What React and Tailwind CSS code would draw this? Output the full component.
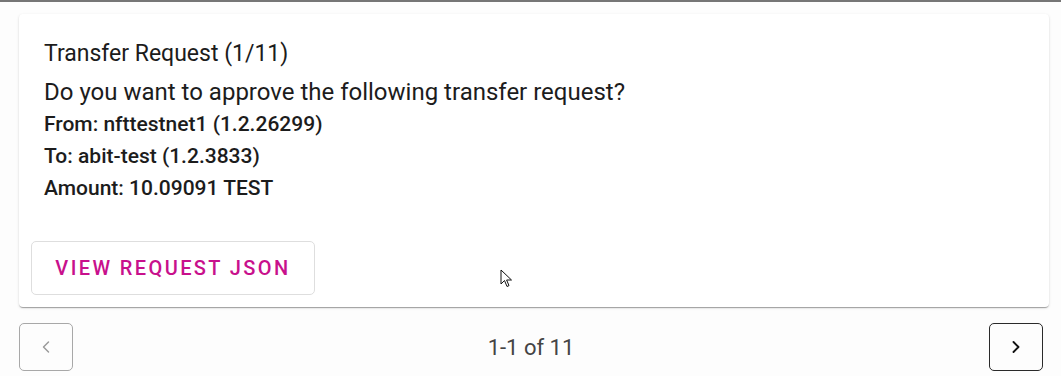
import { ChevronLeft, ChevronRight } from "lucide-react";

const details = [
  "From: nfttestnet1 (1.2.26299)",
  "To: abit-test (1.2.3833)",
  "Amount: 10.09091 TEST",
];

const Cursor = () => (
  <svg
    className="absolute left-[500px] top-[267px]"
    width="14"
    height="20"
    viewBox="0 0 14 20"
  >
    <path
      d="M1 1 L1 15 L4.5 11.5 L7 17.5 L9 16.6 L6.6 11 L11.5 11 Z"
      fill="#fff"
      stroke="#111"
      strokeWidth="1"
      strokeLinejoin="round"
    />
  </svg>
);

const App = () => {
  return (
    <div
      className="relative w-[1061px] h-[376px] bg-[#fdfdfd] border-t-2 border-[#767676] px-[19px] text-[#1c1c1c]"
      style={{ fontFamily: "Roboto, 'Liberation Sans', sans-serif" }}
    >
      {/* Request card */}
      <div className="mt-[12px] w-[1030px] rounded-[4px] bg-white shadow-[0_2px_1px_-1px_rgba(0,0,0,0.2),0_1px_1px_0_rgba(0,0,0,0.14),0_1px_3px_0_rgba(0,0,0,0.12)] px-3 pt-[24px] pb-[12px]">
        <div className="px-[13px]">
          <p className="text-[23px] leading-[32px]">Transfer Request (1/11)</p>
          <p className="mt-[6px] text-[24px] leading-[32px]">
            Do you want to approve the following transfer request?
          </p>
          {details.map((line) => (
            <p key={line} className="text-[21px] leading-[32px] font-medium">
              {line}
            </p>
          ))}
        </div>
        <button className="mt-[37px] h-[54px] w-[284px] rounded-[5px] border border-[#dedede] text-[20px] font-medium tracking-[2.4px] text-[#c8108c]">
          VIEW REQUEST JSON
        </button>
      </div>

      {/* Pagination */}
      <div className="mt-[16px] flex w-[1024px] items-center justify-between">
        <button className="flex h-[48px] w-[54px] items-center justify-center rounded-[5px] border border-[#a8a8a8] text-[#9a9a9a]">
          <ChevronLeft className="w-5 h-5" strokeWidth={1.75} />
        </button>
        <span className="text-[22px] text-[#444]">1-1 of 11</span>
        <button className="flex h-[48px] w-[54px] items-center justify-center rounded-[5px] border border-[#2a2a2a] text-[#111]">
          <ChevronRight className="w-5 h-5" strokeWidth={2.25} />
        </button>
      </div>

      <Cursor />
    </div>
  );
};

export default App;
